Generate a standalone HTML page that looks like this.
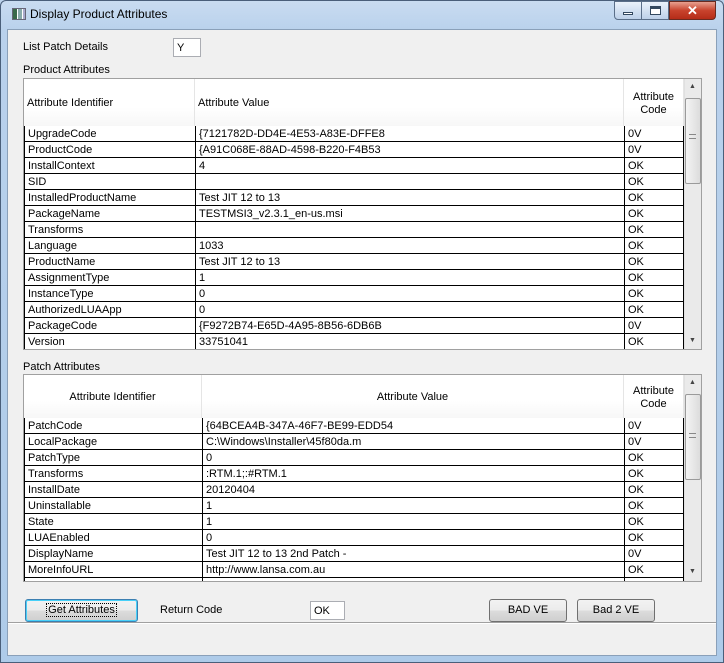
<!DOCTYPE html>
<html><head><style>
*{margin:0;padding:0;box-sizing:border-box}
body{width:724px;height:663px;overflow:hidden;background:#bcd3ec;font-family:"Liberation Sans",sans-serif;font-size:11px;color:#000;position:relative}
.a{position:absolute}
.frame{left:0;top:0;width:724px;height:663px;background:linear-gradient(180deg,#c9dcf1 0%,#b9d1ec 30px,#aecbe9 100%);border:1px solid #4a5f7a;border-radius:6px 6px 0 0}
.client{left:7px;top:29px;width:710px;height:627px;background:#f0f0f0;border:1px solid #8aa0b9}
.tbl{background:#fff;border:1px solid #a0a0a0;overflow:hidden}
.row{position:absolute;height:16px;border-bottom:1px solid #000;left:0;white-space:nowrap}
.c{position:absolute;top:0;height:16px;line-height:17px;padding-left:3px;border-left:1px solid #000;overflow:hidden}
.sb{background:#eaeaea;border-left:1px solid #e0e0e0}
.thumb{background:linear-gradient(90deg,#f4f4f4,#dcdcdc);border:1px solid #9a9a9a;border-radius:2px}
.btn{background:linear-gradient(180deg,#f2f2f2 0%,#ebebeb 50%,#dcdcdc 51%,#cfcfcf 100%);border:1px solid #707070;border-radius:3px;text-align:center;line-height:20px}
.tb{background:#fff;border:1px solid #abadb3;line-height:18px;padding-left:3px}
.hc{position:absolute;top:0;border-right:1px solid #e5e5e5;background:linear-gradient(#fff,#fff 60%,#f7f7f7)}
</style></head><body>
<div class="a frame"></div>
<div class="a" style="left:12px;top:8px;width:14px;height:12px;background:linear-gradient(90deg,#3a6a4a 0 4px,#fff 4px 5px,#8aa 5px 9px,#fff 9px 10px,#aac 10px);border:1px solid #667"></div>
<div class="a" style="left:30px;top:7px;font-size:12px;color:#000">Display Product Attributes</div>
<div class="a" style="left:614px;top:1px;width:28px;height:19px;border:1px solid #5a6e88;border-radius:0 0 0 4px;background:linear-gradient(#eaf2fb,#bdd0e8)"><div class="a" style="left:8px;top:10px;width:10px;height:3px;background:#fff;border:1px solid #33485f"></div></div>
<div class="a" style="left:641px;top:1px;width:28px;height:19px;border:1px solid #5a6e88;background:linear-gradient(#eaf2fb,#bdd0e8)"><div class="a" style="left:8px;top:4px;width:11px;height:9px;border:1px solid #33485f;border-top-width:3px;background:#fff"></div></div>
<div class="a" style="left:669px;top:1px;width:47px;height:19px;border:1px solid #6a2a20;border-radius:0 0 4px 0;background:linear-gradient(#e8a090,#c8432d 50%,#b52c18);color:#fff;text-align:center;font-weight:bold;font-size:13px;line-height:17px">✕</div>
<div class="a client"></div>
<div class="a" style="left:23px;top:41px">List Patch Details</div>
<div class="a tb" style="left:173px;top:38px;width:28px;height:19px">Y</div>
<div class="a" style="left:23px;top:64px">Product Attributes</div>

<div class="a tbl" style="left:23px;top:78px;width:679px;height:272px">
 <div class="hc" style="left:0;width:171px;height:47px"><span class="a" style="left:3px;top:18px">Attribute Identifier</span></div>
 <div class="hc" style="left:171px;width:429px;height:47px"><span class="a" style="left:3px;top:18px">Attribute Value</span></div>
 <div class="hc" style="left:600px;width:60px;height:47px;text-align:center;line-height:13px;padding-top:12px">Attribute<br>Code</div>
 <div id="r1"></div>
 <div class="a sb" style="left:660px;top:0;width:18px;height:270px"></div>
 <div class="a" style="left:665px;top:4px;font-size:7px;color:#444">▲</div>
 <div class="a thumb" style="left:661px;top:19px;width:16px;height:86px"></div>
 <div class="a" style="left:665px;top:55px;width:7px;height:5px;border-top:1px solid #888;border-bottom:1px solid #888"></div>
 <div class="a" style="left:665px;top:258px;font-size:7px;color:#444">▼</div>
</div>
<div class="a" style="left:23px;top:361px">Patch Attributes</div>
<div class="a tbl" style="left:23px;top:374px;width:679px;height:208px">
 <div class="hc" style="left:0;width:178px;height:43px;text-align:center"><span style="position:relative;top:16px">Attribute Identifier</span></div>
 <div class="hc" style="left:178px;width:422px;height:43px;text-align:center"><span style="position:relative;top:16px">Attribute Value</span></div>
 <div class="hc" style="left:600px;width:60px;height:43px;text-align:center;line-height:13px;padding-top:10px">Attribute<br>Code</div>
 <div id="r2"></div>
 <div class="a sb" style="left:660px;top:0;width:18px;height:206px"></div>
 <div class="a" style="left:665px;top:4px;font-size:7px;color:#444">▲</div>
 <div class="a thumb" style="left:661px;top:19px;width:16px;height:86px"></div>
 <div class="a" style="left:665px;top:58px;width:7px;height:5px;border-top:1px solid #888;border-bottom:1px solid #888"></div>
 <div class="a" style="left:665px;top:193px;font-size:7px;color:#444">▼</div>
</div>

<div class="a btn" style="left:25px;top:599px;width:113px;height:23px;border-color:#3c7fb1;box-shadow:inset 0 0 0 1px #48d0f8"><span style="border:1px dotted #000;padding:0 1px">Get Attributes</span></div>
<div class="a" style="left:160px;top:604px">Return Code</div>
<div class="a tb" style="left:310px;top:601px;width:35px;height:19px">OK</div>
<div class="a btn" style="left:489px;top:599px;width:78px;height:23px">BAD VE</div>
<div class="a btn" style="left:577px;top:599px;width:78px;height:23px">Bad 2 VE</div>
<div class="a" style="left:8px;top:622px;width:708px;height:1px;background:#a0a0a0"></div>
<div class="a" style="left:8px;top:623px;width:708px;height:1px;background:#fff"></div>

<script>
function build(id,rows,top,c1,c2){
 var h='';
 rows.forEach(function(r,i){
  h+='<div class="row" style="top:'+(top+i*16)+'px;width:660px">'+
  '<div class="c" style="left:0;width:'+c1+'px">'+r[0]+'</div>'+
  '<div class="c" style="left:'+c1+'px;width:'+(c2-c1)+'px">'+r[1]+'</div>'+
  '<div class="c" style="left:'+c2+'px;width:'+(660-c2)+'px;border-right:1px solid #000">'+r[2]+'</div></div>';
 });
 document.getElementById(id).innerHTML=h;
}
build('r1',[
["UpgradeCode","{7121782D-DD4E-4E53-A83E-DFFE8","0V"],
["ProductCode","{A91C068E-88AD-4598-B220-F4B53","0V"],
["InstallContext","4","OK"],
["SID","","OK"],
["InstalledProductName","Test JIT 12 to 13","OK"],
["PackageName","TESTMSI3_v2.3.1_en-us.msi","OK"],
["Transforms","","OK"],
["Language","1033","OK"],
["ProductName","Test JIT 12 to 13","OK"],
["AssignmentType","1","OK"],
["InstanceType","0","OK"],
["AuthorizedLUAApp","0","OK"],
["PackageCode","{F9272B74-E65D-4A95-8B56-6DB6B","0V"],
["Version","33751041","OK"]],47,171,600);
build('r2',[
["PatchCode","{64BCEA4B-347A-46F7-BE99-EDD54","0V"],
["LocalPackage","C:\\Windows\\Installer\\45f80da.m","0V"],
["PatchType","0","OK"],
["Transforms",":RTM.1;:#RTM.1","OK"],
["InstallDate","20120404","OK"],
["Uninstallable","1","OK"],
["State","1","OK"],
["LUAEnabled","0","OK"],
["DisplayName","Test JIT 12 to 13 2nd Patch -","0V"],
["MoreInfoURL","http://www.lansa.com.au","OK"],
["","",""]],43,178,600);
</script>
</body></html>
